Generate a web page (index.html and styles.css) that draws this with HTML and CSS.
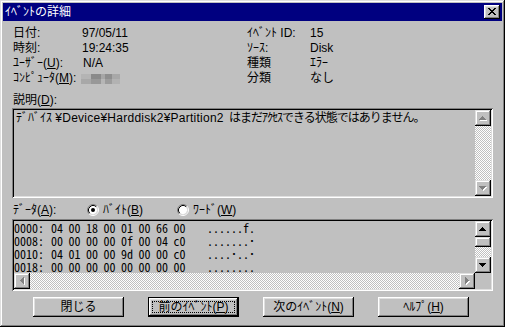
FILE: index.html
```html
<!DOCTYPE html>
<html lang="ja">
<head>
<meta charset="utf-8">
<title>ｲﾍﾞﾝﾄの詳細</title>
<link rel="stylesheet" href="styles.css">
</head>
<body>
<div class="window">
  <div class="titlebar">
    <span class="title">ｲﾍﾞﾝﾄの詳細</span>
    <div class="close">
      <svg width="16" height="14" viewBox="0 0 16 14" shape-rendering="crispEdges"><path fill="#000" d="M4 3h2v1h-2z M10 3h2v1h-2z M5 4h2v1h-2z M9 4h2v1h-2z M6 5h4v1h-4z M7 6h2v1h-2z M6 7h4v1h-4z M5 8h2v1h-2z M9 8h2v1h-2z M4 9h2v1h-2z M10 9h2v1h-2z"/></svg>
    </div>
  </div>
  <div class="body">
    <div class="info">
      <span>日付:</span><span>97/05/11</span><span>ｲﾍﾞﾝﾄ ID:</span><span>15</span>
      <span>時刻:</span><span>19:24:35</span><span>ｿｰｽ:</span><span>Disk</span>
      <span>ﾕｰｻﾞｰ(<u>U</u>):</span><span class="na">N/A</span><span>種類</span><span>ｴﾗｰ</span>
      <span>ｺﾝﾋﾟｭｰﾀ(<u>M</u>):</span><span><span class="blur"><i class="m1"></i><i class="m2"></i><i class="m3"></i><i class="m4"></i><i class="m5"></i></span></span><span>分類</span><span>なし</span>
    </div>

    <div class="desc-label">説明(<u>D</u>):</div>
    <div class="field desc">
      <div class="desc-text">ﾃﾞﾊﾞｲｽ <span class="lat">¥Device¥Harddisk2¥Partition2</span> <span class="jp">はまだｱｸｾｽできる状態ではありません。</span></div>
      <div class="vscroll">
        <div class="sbtn"><svg width="16" height="16" shape-rendering="crispEdges"><path fill="#fff" transform="translate(1 1)" d="M7 6h1v1h1v1h1v1h1v1H4V9h1V8h1V7h1z"/><path fill="#808080" d="M7 6h1v1h1v1h1v1h1v1H4V9h1V8h1V7h1z"/></svg></div>
        <div class="track"></div>
        <div class="sbtn"><svg width="16" height="16" shape-rendering="crispEdges"><path fill="#fff" transform="translate(1 1)" d="M4 6h7v1h-1v1h-1v1h-1v1H7V9H6V8H5V7H4z"/><path fill="#808080" d="M4 6h7v1h-1v1h-1v1h-1v1H7V9H6V8H5V7H4z"/></svg></div>
      </div>
    </div>

    <div class="data-row">
      <span class="data-label">ﾃﾞｰﾀ(<u>A</u>):</span>
      <span class="radio">
        <svg width="12" height="12" viewBox="0 0 12 12"><circle cx="6" cy="6" r="4.2" fill="#fff"/><path d="M2.11 9.89A5.5 5.5 0 0 1 9.89 2.11" fill="none" stroke="#808080"/><path d="M9.89 2.11A5.5 5.5 0 0 1 2.11 9.89" fill="none" stroke="#fff"/><path d="M2.82 9.18A4.5 4.5 0 0 1 9.18 2.82" fill="none" stroke="#000"/><path d="M9.18 2.82A4.5 4.5 0 0 1 2.82 9.18" fill="none" stroke="#dfdfdf"/><circle cx="6" cy="6" r="2" fill="#000"/></svg>
        <span>ﾊﾞｲﾄ(<u>B</u>)</span>
      </span>
      <span class="radio">
        <svg width="12" height="12" viewBox="0 0 12 12"><circle cx="6" cy="6" r="4.2" fill="#fff"/><path d="M2.11 9.89A5.5 5.5 0 0 1 9.89 2.11" fill="none" stroke="#808080"/><path d="M9.89 2.11A5.5 5.5 0 0 1 2.11 9.89" fill="none" stroke="#fff"/><path d="M2.82 9.18A4.5 4.5 0 0 1 9.18 2.82" fill="none" stroke="#000"/><path d="M9.18 2.82A4.5 4.5 0 0 1 2.82 9.18" fill="none" stroke="#dfdfdf"/></svg>
        <span>ﾜｰﾄﾞ(<u>W</u>)</span>
      </span>
    </div>

    <div class="field hex">
      <div class="hex-lines">
        <div class="hex-line"><span class="addr">0000:</span><span class="b">04</span><span class="b">00</span><span class="b">18</span><span class="b">00</span><span class="b">01</span><span class="b">00</span><span class="b">66</span><span class="b">00</span><span class="asc">......f.</span></div>
        <div class="hex-line"><span class="addr">0008:</span><span class="b">00</span><span class="b">00</span><span class="b">00</span><span class="b">00</span><span class="b">0f</span><span class="b">00</span><span class="b">04</span><span class="b">c0</span><span class="asc">.......･</span></div>
        <div class="hex-line"><span class="addr">0010:</span><span class="b">04</span><span class="b">01</span><span class="b">00</span><span class="b">00</span><span class="b">9d</span><span class="b">00</span><span class="b">00</span><span class="b">c0</span><span class="asc">....･..･</span></div>
        <div class="hex-line"><span class="addr">0018:</span><span class="b">00</span><span class="b">00</span><span class="b">00</span><span class="b">00</span><span class="b">00</span><span class="b">00</span><span class="b">00</span><span class="b">00</span><span class="asc">........</span></div>
      </div>
      <div class="vscroll">
        <div class="sbtn"><svg width="16" height="16" shape-rendering="crispEdges"><path fill="#000" d="M7 6h1v1h1v1h1v1h1v1H4V9h1V8h1V7h1z"/></svg></div>
        <div class="sbtn thumb"></div>
        <div class="track"></div>
        <div class="sbtn"><svg width="16" height="16" shape-rendering="crispEdges"><path fill="#000" d="M4 6h7v1h-1v1h-1v1h-1v1H7V9H6V8H5V7H4z"/></svg></div>
      </div>
      <div class="hscroll">
        <div class="sbtn"><svg width="16" height="16" shape-rendering="crispEdges"><path fill="#fff" transform="translate(1 1)" d="M6 7h1V6h1V5h1V4h1v7H9v-1H8V9H7V8H6z"/><path fill="#808080" d="M6 7h1V6h1V5h1V4h1v7H9v-1H8V9H7V8H6z"/></svg></div>
        <div class="track"></div>
        <div class="sbtn"><svg width="16" height="16" shape-rendering="crispEdges"><path fill="#fff" transform="translate(1 1)" d="M6 4h1v1h1v1h1v1h1v1H9v1H8v1H7v1H6z"/><path fill="#808080" d="M6 4h1v1h1v1h1v1h1v1H9v1H8v1H7v1H6z"/></svg></div>
      </div>
      <div class="corner"></div>
    </div>

    <div class="buttons">
      <div class="btn">閉じる</div>
      <div class="btn default">前のｲﾍﾞﾝﾄ(<u>P</u>)</div>
      <div class="btn">次のｲﾍﾞﾝﾄ(<u>N</u>)</div>
      <div class="btn">ﾍﾙﾌﾟ(<u>H</u>)</div>
    </div>
  </div>
</div>
</body>
</html>
```
FILE: styles.css
```css
* { box-sizing: border-box; }
html, body { margin: 0; padding: 0; }
body {
  width: 505px;
  height: 327px;
  overflow: hidden;
  background: #c0c0c0;
  color: #000;
  font: 12px "Liberation Sans", "Noto Sans CJK JP", sans-serif;
}
u { text-decoration: underline; text-underline-offset: 1px; }

.window {
  width: 505px;
  height: 327px;
  padding: 3px;
  background: #c0c0c0;
  box-shadow: inset -1px -1px #000, inset 1px 1px #dfdfdf, inset -2px -2px #808080, inset 2px 2px #fff;
  display: flex;
  flex-direction: column;
}

.titlebar {
  height: 18px;
  background: #000080;
  color: #fff;
  display: flex;
  align-items: center;
  padding: 0 2px;
  flex: none;
}
.title { line-height: 18px; }
.close {
  margin-left: auto;
  width: 16px;
  height: 14px;
  background: #c0c0c0;
  box-shadow: inset -1px -1px #000, inset 1px 1px #fff, inset -2px -2px #808080, inset 2px 2px #dfdfdf;
}
.close svg, .sbtn svg, .radio svg { display: block; }

.body { padding: 0 9px; }

.info {
  display: grid;
  grid-template-columns: 69px 165px 63px 1fr;
  line-height: 15px;
  margin: 5px 0 0 1px;
}
.na { padding-left: 1px; }
.blur {
  display: flex;
  width: 39px;
  height: 10px;
  margin: 3px 0 0 -1px;
}
.blur i { display: block; height: 10px; }
.m1 { width: 10px; background: linear-gradient(#b4b4b4 50%, #a8a8a8 50%); }
.m2 { width: 10px; background: linear-gradient(#8a8a8a 50%, #989898 50%); }
.m3 { width: 4px; background: linear-gradient(#a6a6a6 50%, #b6b6b6 50%); }
.m4 { width: 7px; background: linear-gradient(#8e8e8e 50%, #9c9c9c 50%); }
.m5 { width: 8px; background: linear-gradient(#a8a8a8 50%, #b2b2b2 50%); }

.desc-label { line-height: 14px; margin: 7px 0 0 1px; }

.field {
  background: #c0c0c0;
  padding: 2px;
  box-shadow: inset 1px 1px #808080, inset -1px -1px #fff, inset 2px 2px #000, inset -2px -2px #dfdfdf;
}
.desc {
  height: 90px;
  margin-top: 1px;
  display: flex;
}
.desc-text {
  flex: 1;
  padding: 1px 2px;
  line-height: 14px;
  white-space: nowrap;
  overflow: hidden;
}
.lat { letter-spacing: 0.25px; }
.jp { letter-spacing: -1px; padding-left: 2px; }

.vscroll { width: 16px; display: flex; flex-direction: column; }
.sbtn {
  width: 16px;
  height: 16px;
  flex: none;
  background: #c0c0c0;
  box-shadow: inset -1px -1px #000, inset 1px 1px #dfdfdf, inset -2px -2px #808080, inset 2px 2px #fff;
}
.thumb { height: 10px; }
.track {
  flex: 1;
  background: repeating-conic-gradient(#c0c0c0 0 25%, #fff 0 50%) 0 0 / 2px 2px;
}

.data-row {
  display: flex;
  align-items: center;
  height: 14px;
  line-height: 14px;
  margin: 5px 0 0 1px;
}
.data-label { width: 74px; }
.radio { display: flex; align-items: center; gap: 4px; width: 90px; }

.hex {
  height: 72px;
  margin-top: 2px;
  display: grid;
  grid-template-columns: 1fr 16px;
  grid-template-rows: 1fr 16px;
}
.hex-lines {
  overflow: hidden;
  font-family: "Noto Sans Mono CJK JP", "Noto Sans CJK JP", monospace;
  font-size: 12px;
  line-height: 13px;
}
.hex-line { display: flex; white-space: pre; height: 13px; }
.addr { width: 37px; flex: none; }
.b { width: 17.5px; flex: none; }
.asc { margin-left: 16px; }
.hscroll { display: flex; }
.corner { background: #c0c0c0; }

.buttons {
  display: flex;
  gap: 24px;
  margin: 6px 0 0 21px;
}
.btn {
  position: relative;
  width: 91px;
  height: 20px;
  line-height: 20px;
  text-align: center;
  background: #c0c0c0;
  box-shadow: inset -1px -1px #000, inset 1px 1px #fff, inset -2px -2px #808080, inset 2px 2px #dfdfdf;
}
.btn.default {
  border: 1px solid #000;
  line-height: 18px;
}
.btn.default::after {
  content: "";
  position: absolute;
  inset: 3px;
  border: 1px dotted #000;
}
```
